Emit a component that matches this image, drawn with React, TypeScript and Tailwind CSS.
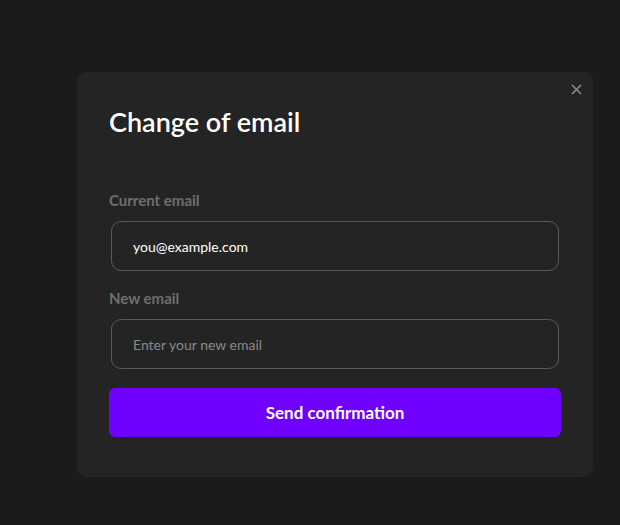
import React, { useState } from "react";

const ChangeEmailModal = () => {
  const [newEmail, setNewEmail] = useState("");

  return (
    <div className="relative w-[516px] h-[405px] rounded-[10px] bg-[#242424] px-8 pt-[30px]">
      <button className="absolute right-[11px] top-[11px] flex h-[12px] w-[12px] items-center justify-center text-[#8a8a8a]">
        <svg width="11" height="11" viewBox="0 0 11 11" fill="none" stroke="currentColor" strokeWidth="1.6">
          <path d="M1 1L10 10M10 1L1 10" />
        </svg>
      </button>
      <h2 className="text-[27px] font-semibold leading-[40px] text-white">Change of email</h2>

      <div className="mt-[48px] flex flex-col">
        <label className="text-[15px] font-bold leading-[20px] text-[#6e6e6e]">Current email</label>
        <div className="mx-[2px] mt-[11px] flex h-[50px] items-center rounded-[10px] border border-[#5a5a5a] px-[21px]">
          <span className="text-[14px] text-white">you@example.com</span>
        </div>

        <label className="mt-[17px] text-[15px] font-bold leading-[20px] text-[#6e6e6e]">New email</label>
        <div className="mx-[2px] mt-[11px] flex h-[50px] items-center rounded-[10px] border border-[#5a5a5a] px-[21px]">
          <input
            type="email"
            value={newEmail}
            onChange={(e) => setNewEmail(e.target.value)}
            placeholder="Enter your new email"
            className="w-full bg-transparent text-[14px] text-white placeholder:text-[#8a8a8a] focus:outline-none"
          />
        </div>

        <button className="mt-[19px] h-[49px] w-full rounded-[6px] bg-[#7000ff] text-[17px] font-bold text-white">
          Send confirmation
        </button>
      </div>
    </div>
  );
};

export default function App() {
  return (
    <div className="min-h-[525px] bg-[#1b1b1b] pl-[77px] pt-[72px]" style={{ fontFamily: "Lato, 'Noto Sans', sans-serif" }}>
      <ChangeEmailModal />
    </div>
  );
}
